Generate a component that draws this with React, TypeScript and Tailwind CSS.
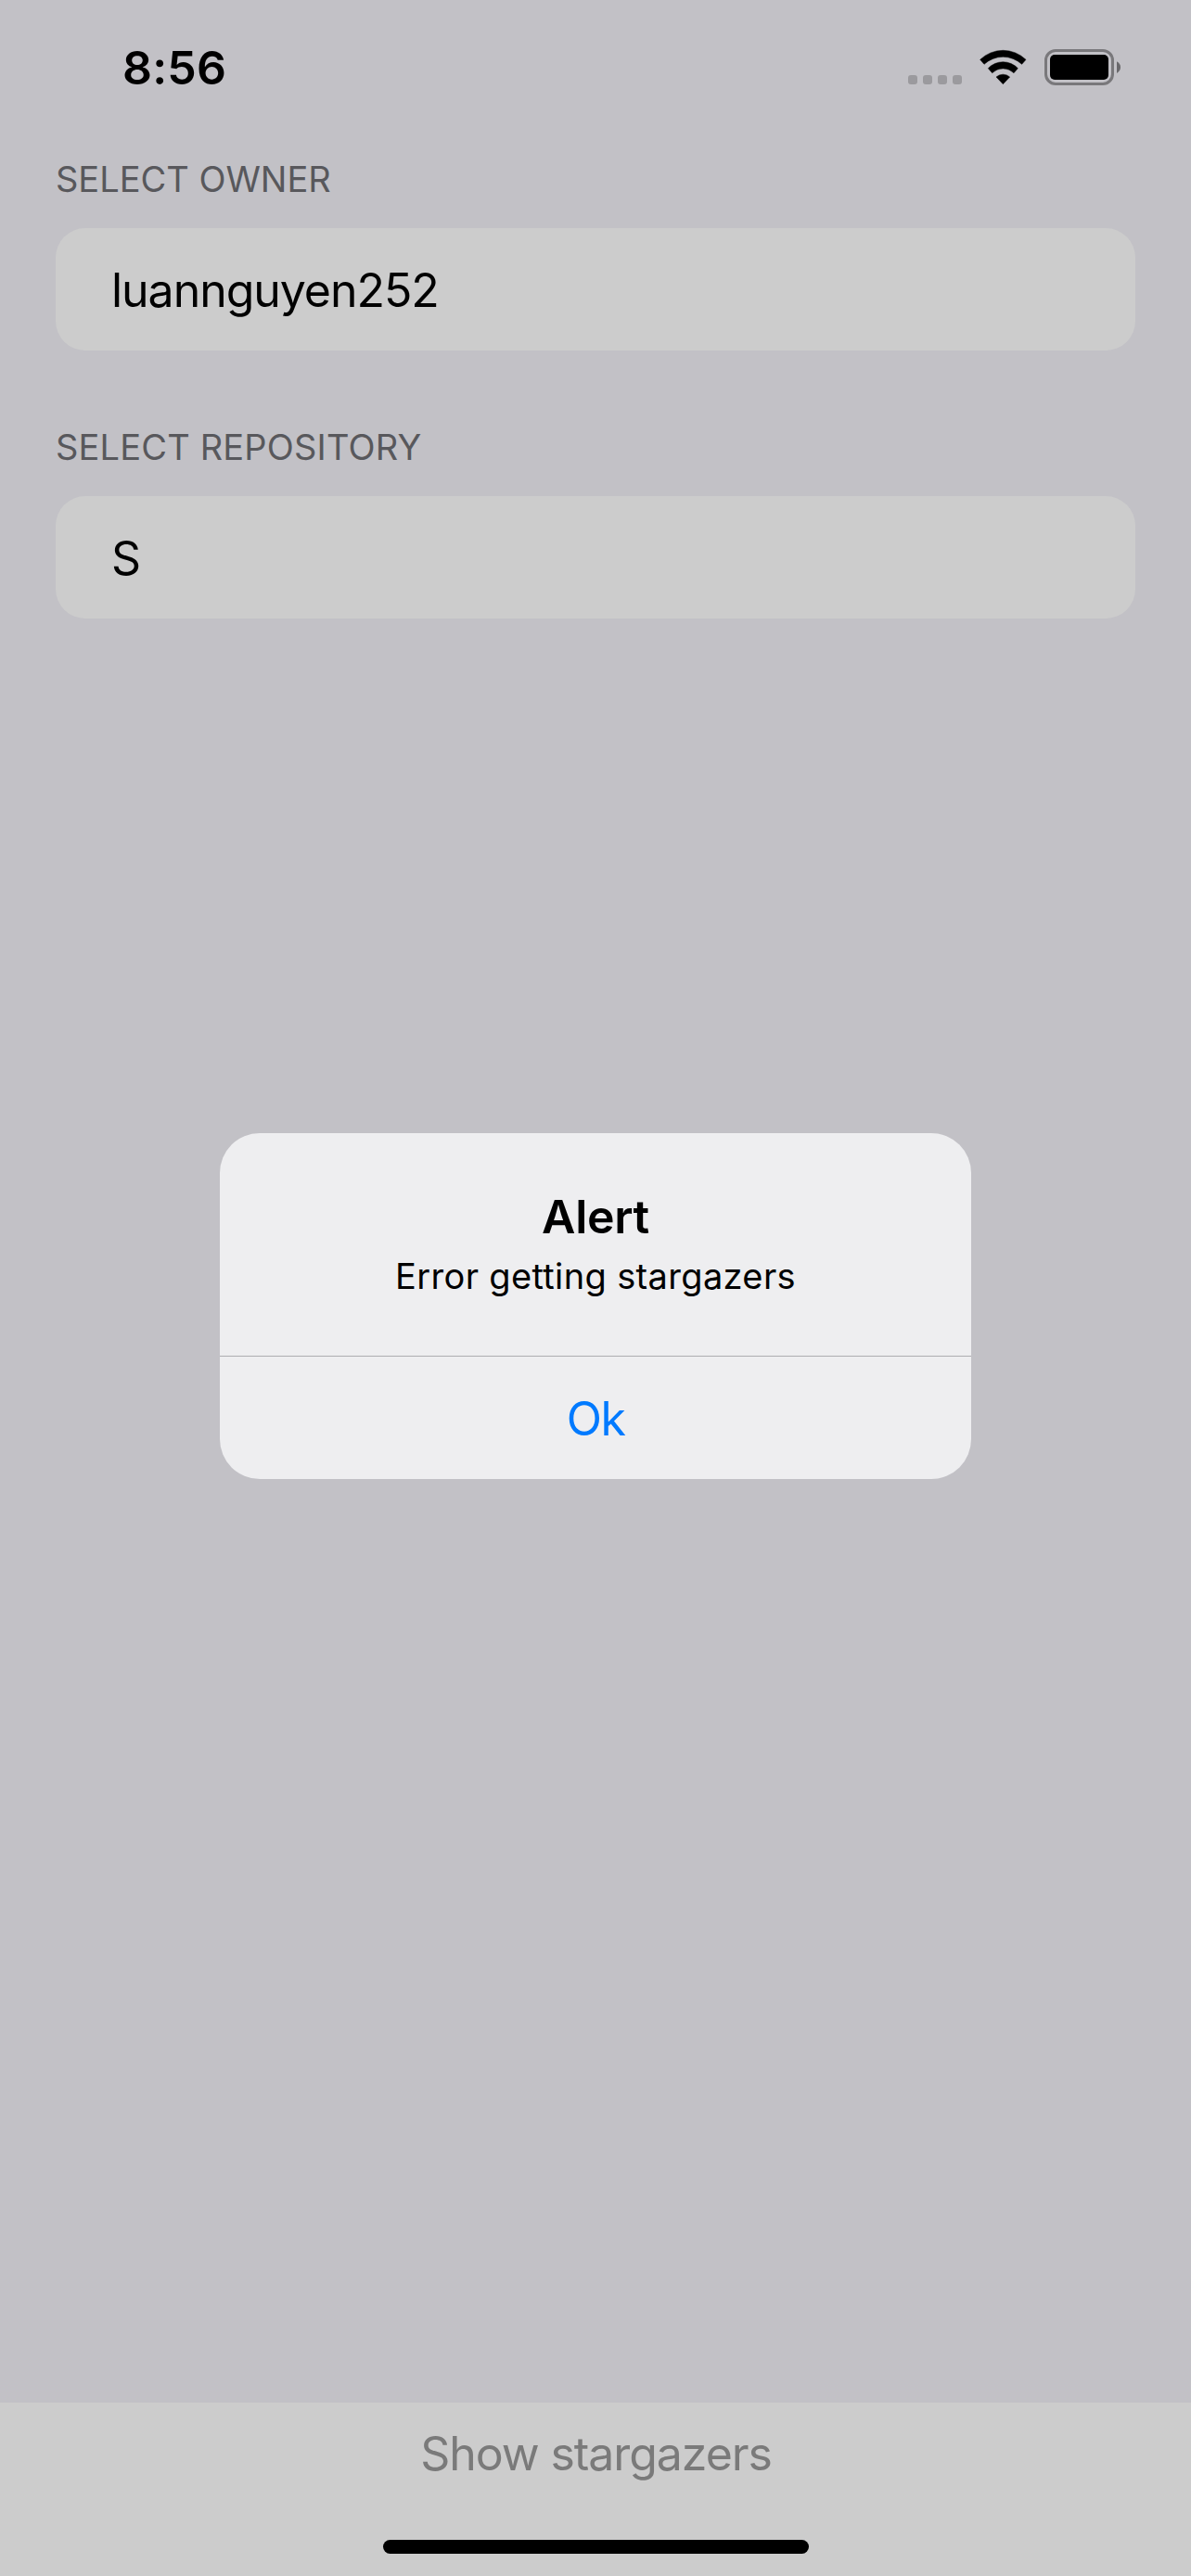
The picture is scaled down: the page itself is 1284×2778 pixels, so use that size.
function SignalDots() {
  return (
    <div className="mb-[1px] flex h-[10px] gap-[6px] self-end">
      {[0, 1, 2, 3].map((i) => (
        <span key={i} className="size-[10px] rounded-[3px] bg-[#9b9a9e]" />
      ))}
    </div>
  );
}

function WifiIcon() {
  return (
    <svg className="ml-[19px] h-[39px] w-[51px]" viewBox="0 0 153 117" aria-hidden="true">
      <g fill="#000" stroke="#000" strokeWidth="1.5" strokeLinejoin="round">
        <path d="M2 34A106 106 0 0 1 150 34L137 49A89.5 89.5 0 0 0 15 49Z" />
        <path d="M28 62A66 66 0 0 1 124 62L111 77A50 50 0 0 0 41 77Z" />
        <path d="M54 90A33 33 0 0 1 98 90L76 113Z" />
      </g>
    </svg>
  );
}

function BatteryIcon() {
  return (
    <svg className="ml-[19px] h-[39px] w-[82px]" viewBox="0 0 82 39" aria-hidden="true">
      <rect x="1.5" y="1.5" width="72" height="36" rx="10.5" fill="none" stroke="#79787b" strokeWidth="3" />
      <rect x="6" y="6" width="63" height="27" rx="5" fill="#000" />
      <path d="M78 13.3Q82 15.5 82 19.5T78 25.9Z" fill="#69686b" />
    </svg>
  );
}

function StatusBar() {
  return (
    <header className="flex h-[170px] items-start justify-between pl-[132px] pr-[76px]">
      <time className="mt-[43px] text-[50px] font-semibold leading-[60px] tracking-[0.2px]">8:56</time>
      <div className="mt-[53px] flex h-[39px]">
        <SignalDots />
        <WifiIcon />
        <BatteryIcon />
      </div>
    </header>
  );
}

function Field({ label, value, spacing }: { label: string; value: string; spacing: string }) {
  return (
    <section>
      <h2 className={`text-[38px] font-normal leading-[46px] text-[#58585c] ${spacing}`}>{label}</h2>
      <div className="mt-[30px] flex h-[132px] items-start rounded-[32px] bg-[#cccccc] pl-[60px] pt-[37px] text-[50px] leading-[60px] tracking-[-1.04px]">
        {value}
      </div>
    </section>
  );
}

function AlertDialog() {
  return (
    <div className="absolute inset-0 flex items-start justify-center pt-[1222px]">
      <div
        role="alertdialog"
        className="flex h-[373px] w-[810px] flex-col overflow-hidden rounded-[43px] bg-[#eeeef0] text-center"
      >
        <div className="h-[240px] pt-[60px]">
          <h1 className="text-[50px] font-semibold leading-[60px] tracking-[-0.32px]">Alert</h1>
          <p className="mt-[11px] text-[38px] leading-[46px] tracking-[0.35px]">Error getting stargazers</p>
        </div>
        <button className="h-[133px] border-t border-[#adadb0] pt-[2px] text-[50px] leading-[60px] tracking-[-1.5px] text-[#007aff]">
          Ok
        </button>
      </div>
    </div>
  );
}

export default function App() {
  return (
    <div className="relative flex h-[2778px] w-[1284px] flex-col overflow-hidden bg-[#c2c1c6] font-['Inter',sans-serif] text-black">
      <StatusBar />
      <main className="flex flex-1 flex-col gap-[81px] px-[60px]">
        <Field label="SELECT OWNER" value="luannguyen252" spacing="tracking-[-0.02px]" />
        <Field label="SELECT REPOSITORY" value="S" spacing="tracking-[0.17px]" />
      </main>
      <footer className="flex h-[187px] flex-col items-center bg-[#cccccc] pt-[25px]">
        <button className="pl-[1px] text-[50px] leading-[60px] tracking-[-1.08px] text-[#7a7a7a]">Show stargazers</button>
        <div className="mt-[63px] h-[15px] w-[459px] rounded-full bg-black" />
      </footer>
      <AlertDialog />
    </div>
  );
}
